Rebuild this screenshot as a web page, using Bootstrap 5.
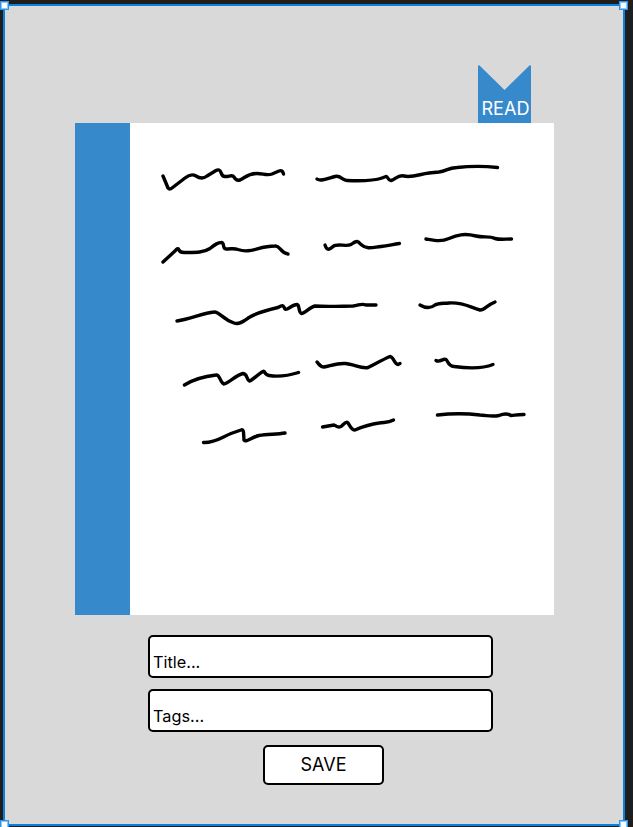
<!DOCTYPE html>
<html lang="en">
<head>
<meta charset="utf-8">
<meta name="viewport" content="width=device-width, initial-scale=1">
<title>Journal entry</title>
<link href="https://cdn.jsdelivr.net/npm/bootstrap@5.3.0/dist/css/bootstrap.min.css" rel="stylesheet">
<style>
body{background:#1e1e1e;font-family:Inter,sans-serif;color:#000;height:827px}
.artboard{width:622px;height:822px;margin:4px 0 0 3px;border:2px solid #0d80dc;background:#d9d9d9;padding:59px 69px 0 70px}
.grip{width:9px;height:9px;background:#fff;border:1px solid #2b94ee;box-shadow:inset 0 0 0 1px #8cc6f8;z-index:2}
.grip-tl{left:0;top:1px}.grip-tr{left:619px;top:1px}
.grip-bl{left:0;top:820px}.grip-br{left:619px;top:820px}
.ribbon{width:53px;height:58px;margin-right:23px;background:#3689ca;color:#fff;font-size:18.1px;font-weight:370;line-height:20px;padding:0 0 5px 2px;clip-path:polygon(0 1px,1px 0,26.5px 25px,52px 0,53px 1px,53px 100%,0 100%)}
.notebook{width:479px;height:492px}
.spine{width:55px;background:#3689ca}
.entry{width:345px;gap:11px;margin-top:19.5px;margin-left:73px}
.field,.field:focus{height:43px;border:2px solid #000;border-radius:5px;background:#fff;padding:11px 3px 0;font-size:16.3px;font-weight:370;line-height:22px;color:#000;box-shadow:none}
.field::placeholder{color:#000;opacity:1}
.save,.save:hover{width:121px;height:40px;border:2px solid #000;border-radius:5px;background:#fff;color:#000;font-size:18px;font-weight:370;line-height:20px;padding:0;margin:2px 0 0 6px}
</style>
</head>
<body class="m-0 overflow-hidden position-relative">
<main class="artboard d-flex flex-column">
  <div class="ribbon d-flex align-items-end justify-content-center align-self-end flex-shrink-0">READ</div>
  <section class="notebook d-flex flex-shrink-0 bg-white">
    <div class="spine"></div>
    <svg width="424" height="492" viewBox="130 123 424 492" fill="none" stroke="#000" stroke-width="3.4" stroke-linecap="round" stroke-linejoin="round" aria-label="Handwriting">
      <path d="M163 176Q166 183 168 188Q169.5 190 172 188L185 178Q191 173 196 176Q202 180 207 176L216 170.5Q219.5 168.5 221 172.5Q222 176.5 225 176.5C229 177 232 174 234 177Q236 181 240 180C246 177 248 173.5 257 173.5C263 173.5 267 176 272 174L279 171Q282.5 169.5 283.500 174"/>
      <path d="M317 179C321 182 329 178 335 176.500C341 175 342 180.500 347 180.500C360 181 375 180.500 382 178L386 176.500C388 176 388 181 391 180.500C396 179 398 174.500 404 176C412 178 420 174 429 173L439 172C447 171 447 168 457 167.500C471 166 484 166 497.500 167.500"/>
      <path d="M163 262L175 251Q178 247 179 250Q180 252.500 184 252.500C195 252.500 203 253 210 248.500C213 246 218 242.500 221 242.500C225 242 222 249 226 249C232 249 234 248 238 249.500C251 254 258 246 275 246C280 245 280 253 288 254"/>
      <path d="M325 245C327 251 329 250 333 246.500C337 243 346 247 351 244.500C357 240 358 241 361 244.500C367 250 374 247 381 246.500C389 246 393 244 399.500 243.500"/>
      <path d="M426 239C435 240.500 441 242 449 238.500C457 235 464 233 476 236C484 238 489 235.500 495 238.500C500 240 505 239 511.500 239"/>
      <path d="M177 321C191 319 203 313 214 312C219 311 222 319 234 323C239 325 244 321 249 317.500C255 314 267 310 278 307.500C284 304 283 306 285 309C287 311 292 304.500 297 304.500C300 305 298 312.500 301.500 313.500C305 313 310 307 315 306C329 307 343 306 353 306C359 305.500 361 303 366 305L376 305"/>
      <path d="M420 305C425 308 430 309 435 305C438 303 442 303.500 449 303C464 302 471 308 480 310C484 310.500 487 305 495 302"/>
      <path d="M184.500 385C194 379 207 376 216 375C220 374 220 383 224 384C230 382 236 375 243 373.500C248 374 246 380 249.500 381C253 380 258 374 263 371.500C265 370 264 375 269 375.500C279 377 289 375.500 298.500 372.500"/>
      <path d="M317 362C319 364 320 367 324 367C330 366 337 363 345 363.500C354 364 361 369 368 367.500C375 364 384 359 390 356.500C394 357 394 364 398 364.500L400 363.500"/>
      <path d="M436 360.500C440 363 443 358 446 359.500C448 361 448 366 454 366.500C465 368 482 369 493 364.500"/>
      <path d="M203.500 442.500C215 443 222 437 231 433.500L241 430Q243 429 243.500 432L244 440C246 443 252 437 259 435.500C268 434 277 434.500 285 433"/>
      <path d="M322.500 427L334 425C337 426 337 428 341 426.500C344 424 346 421 347.500 422.500C350 425 351 430 355 430C362 427 371 424 379 423C385 422 388 423 393.500 420"/>
      <path d="M437.500 415C454 413 472 414 480 415C488 415.500 492 417 499 415.500C504 413.500 507 413 511 415.500C515 415.500 515 414.500 524 414.500"/>
    </svg>
  </section>
  <form class="entry d-flex flex-column">
    <input class="field form-control" type="text" placeholder="Title..." aria-label="Title">
    <input class="field form-control" type="text" placeholder="Tags..." aria-label="Tags">
    <button class="save btn align-self-center" type="button">SAVE</button>
  </form>
</main>
<span class="grip grip-tl position-absolute"></span><span class="grip grip-tr position-absolute"></span>
<span class="grip grip-bl position-absolute"></span><span class="grip grip-br position-absolute"></span>
<script src="https://cdn.jsdelivr.net/npm/bootstrap@5.3.0/dist/js/bootstrap.bundle.min.js"></script>
</body>
</html>
